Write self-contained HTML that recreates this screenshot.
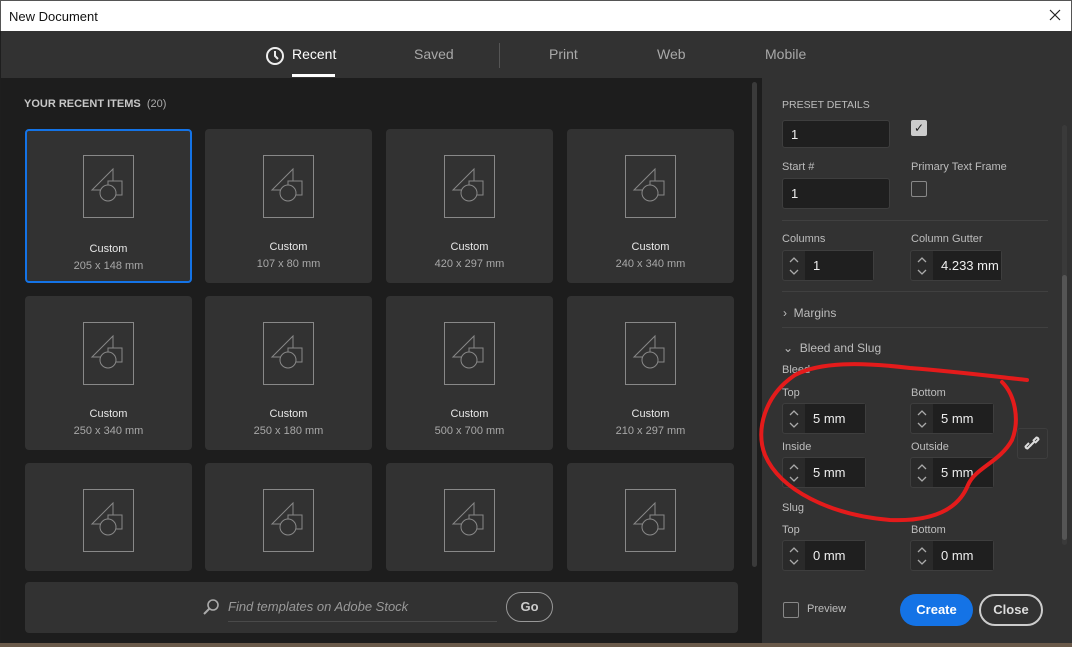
<!DOCTYPE html>
<html><head><meta charset="utf-8"><style>
*{box-sizing:border-box;margin:0;padding:0}
body{width:1072px;height:647px;overflow:hidden;background:#1e1e1e;font-family:"Liberation Sans",sans-serif;position:relative}
.abs{position:absolute}
.title{left:0;top:0;width:1072px;height:31px;background:#fff;border:1px solid #555;border-bottom:none;font-size:13px;color:#111;padding:8px 0 0 8px}
.tabs{left:1px;top:31px;width:1071px;height:47px;background:#323232}
.tab{top:46px;font-size:14px;color:#a8a8a8}
.left{left:1px;top:78px;width:761px;height:565px;background:#1d1d1d}
.card{position:absolute;width:167px;height:154px;background:#323232;border-radius:4px}
.card svg{position:absolute;left:57px;top:25px}
.card .n{position:absolute;top:112px;width:100%;text-align:center;font-size:11px;color:#e8e8e8}
.card .s{position:absolute;top:129px;width:100%;text-align:center;font-size:11px;color:#a8a8a8}
.right{left:762px;top:78px;width:310px;height:565px;background:#323232}
.lbl{position:absolute;font-size:11px;color:#bdbdbd}
.inp{position:absolute;background:#1f1f1f;border:1px solid #3e3e3e;border-radius:3px;color:#eee;font-size:13px;padding-left:8px;display:flex;align-items:center}
.spin{position:absolute;height:31px;border:1px solid #3e3e3e;border-radius:3px;background:#2a2a2a}
.spin svg{position:absolute;left:5px;top:5px}
.spin .v{position:absolute;left:22px;top:0;right:0;height:29px;background:#1f1f1f;color:#eee;font-size:13px;padding-left:8px;line-height:29px}
.hr{position:absolute;left:782px;width:266px;height:1px;background:#404040}
</style></head><body>
<div class="abs title">New Document</div>
<svg class="abs" style="left:1049px;top:9px" width="12" height="12"><path d="M1 1L11 11M11 1L1 11" stroke="#222" stroke-width="1.2"/></svg>
<div class="abs tabs"></div>
<svg class="abs" style="left:265px;top:46px" width="20" height="20"><circle cx="10" cy="10" r="8" fill="none" stroke="#eee" stroke-width="2"/><path d="M10 5v5l3 3" fill="none" stroke="#eee" stroke-width="2"/></svg>
<div class="abs tab" style="left:292px;color:#fff">Recent</div>
<div class="abs" style="left:292px;top:74px;width:43px;height:3px;background:#fff"></div>
<div class="abs tab" style="left:414px">Saved</div>
<div class="abs" style="left:499px;top:43px;width:1px;height:25px;background:#555"></div>
<div class="abs tab" style="left:549px">Print</div>
<div class="abs tab" style="left:657px">Web</div>
<div class="abs tab" style="left:765px">Mobile</div>
<div class="abs left"></div>
<div class="abs" style="left:24px;top:98px;font-size:11px;color:#c8c8c8;font-weight:bold">YOUR RECENT ITEMS <span style="font-weight:normal;color:#aaa">&nbsp;(20)</span></div>
<div class="abs" style="left:752px;top:82px;width:5px;height:485px;background:#3a3a3a;border-radius:3px"></div>
<div id="grid"></div>
<div class="abs" style="left:25px;top:582px;width:713px;height:51px;background:#323232;border-radius:4px"></div>
<svg class="abs" style="left:202px;top:598px" width="18" height="18"><circle cx="11" cy="7" r="5" fill="none" stroke="#aaa" stroke-width="1.6"/><path d="M7.5 10.5L2 16" stroke="#aaa" stroke-width="2"/></svg>
<div class="abs" style="left:228px;top:599px;font-size:13px;color:#999;font-style:italic">Find templates on Adobe Stock</div>
<div class="abs" style="left:228px;top:621px;width:269px;height:1px;background:#4a4a4a"></div>
<div class="abs" style="left:506px;top:592px;width:47px;height:30px;border:1.5px solid #999;border-radius:15px;color:#ccc;font-size:13px;font-weight:bold;text-align:center;line-height:27px">Go</div>
<div class="abs right"></div>
<div class="abs" style="left:1062px;top:125px;width:5px;height:420px;background:#3a3a3a;border-radius:3px"></div>
<div class="abs" style="left:1062px;top:275px;width:5px;height:265px;background:#555;border-radius:3px"></div>
<div class="lbl" style="left:782px;top:99px;font-size:10.5px">PRESET DETAILS</div>
<div class="inp" style="left:782px;top:120px;width:108px;height:28px">1</div>
<div class="abs" style="left:911px;top:120px;width:16px;height:16px;background:#ccc;border-radius:2px;color:#222;font-size:12px;text-align:center;line-height:16px">✓</div>
<div class="lbl" style="left:782px;top:161px">Start #</div>
<div class="lbl" style="left:911px;top:161px">Primary Text Frame</div>
<div class="inp" style="left:782px;top:178px;width:108px;height:31px">1</div>
<div class="abs" style="left:911px;top:181px;width:16px;height:16px;border:1px solid #888;border-radius:2px"></div>
<div class="hr" style="top:220px"></div>
<div class="lbl" style="left:782px;top:233px">Columns</div>
<div class="lbl" style="left:911px;top:233px">Column Gutter</div>
<div id="spins"></div>
<div class="hr" style="top:291px"></div>
<div class="lbl" style="left:783px;top:306px;font-size:12px">›&nbsp; Margins</div>
<div class="hr" style="top:327px"></div>
<div class="lbl" style="left:783px;top:341px;font-size:12px">⌄&nbsp; Bleed and Slug</div>
<div class="lbl" style="left:782px;top:364px">Bleed</div>
<div class="lbl" style="left:782px;top:387px">Top</div>
<div class="lbl" style="left:911px;top:387px">Bottom</div>
<div class="lbl" style="left:782px;top:441px">Inside</div>
<div class="lbl" style="left:911px;top:441px">Outside</div>
<div class="abs" style="left:1017px;top:428px;width:31px;height:31px;border:1px solid #3e3e3e;border-radius:3px"></div>
<svg class="abs" style="left:1024px;top:435px" width="17" height="17"><g fill="none" stroke="#ddd" stroke-width="2"><path d="M7 10 L3.5 13.5 A2 2 0 0 1 1.5 11.5 L5 8"/><path d="M10 7 L13.5 3.5 A2 2 0 0 0 11.5 1.5 L8 5" transform="translate(1 1)"/><path d="M6 11L11 6"/></g></svg>
<div class="lbl" style="left:782px;top:502px">Slug</div>
<div class="lbl" style="left:782px;top:524px">Top</div>
<div class="lbl" style="left:911px;top:524px">Bottom</div>
<div class="abs" style="left:783px;top:602px;width:16px;height:16px;border:1px solid #888;border-radius:2px"></div>
<div class="lbl" style="left:807px;top:603px">Preview</div>
<div class="abs" style="left:900px;top:594px;width:73px;height:32px;background:#1473e6;border-radius:16px;color:#fff;font-size:13px;font-weight:bold;text-align:center;line-height:32px">Create</div>
<div class="abs" style="left:979px;top:594px;width:64px;height:32px;border:2px solid #ccc;border-radius:16px;color:#ddd;font-size:13px;font-weight:bold;text-align:center;line-height:28px">Close</div>
<svg class="abs" style="left:0;top:0" width="1072" height="647"><path d="M1027 380 C990 376 960 372 910 368 C860 362 820 362 795 375 C765 395 755 430 765 455 C780 490 830 515 890 520 C940 522 960 505 968 485 C975 468 1000 462 1012 440 C1020 420 1015 395 1002 382" fill="none" stroke="#e41b1b" stroke-width="4" stroke-linecap="round"/></svg>
<div class="abs" style="left:0;top:643px;width:1072px;height:4px;background:#6a5a4a"></div>
<script>
var xs=[25,205,386,567],ys=[129,296,463],
d=[["205 x 148 mm","107 x 80 mm","420 x 297 mm","240 x 340 mm"],["250 x 340 mm","250 x 180 mm","500 x 700 mm","210 x 297 mm"],["","","",""]],h='';
for(var r=0;r<3;r++)for(var c=0;c<4;c++){var ht=r==2?108:154;
h+='<div class="card" style="left:'+xs[c]+'px;top:'+ys[r]+'px;height:'+ht+'px;'+(r==0&&c==0?'border:2px solid #1473e6;':'')+'"><svg width="54" height="66" style="'+(r==0&&c==0?'left:55px;top:23px':'')+'"><rect x="1.5" y="1.5" width="50" height="62" fill="none" stroke="#888" stroke-width="1"/><path d="M31 15 L31 36 L10 36 Z" fill="none" stroke="#888"/><rect x="26" y="27" width="14" height="14" fill="#323232" stroke="#888"/><circle cx="26" cy="39" r="8" fill="#323232" stroke="#888"/></svg>'+(r<2?'<div class="n">Custom</div><div class="s">'+d[r][c]+'</div>':'')+'</div>';}
document.getElementById('grid').innerHTML=h;
var sp=[[782,250,92,"1"],[910,250,92,"4.233 mm"],[782,403,84,"5 mm"],[910,403,84,"5 mm"],[782,457,84,"5 mm"],[910,457,84,"5 mm"],[782,540,84,"0 mm"],[910,540,84,"0 mm"]],s='';
sp.forEach(function(p){s+='<div class="spin" style="left:'+p[0]+'px;top:'+p[1]+'px;width:'+p[2]+'px"><svg width="12" height="20"><path d="M2 6L6 2L10 6M2 14L6 18L10 14" fill="none" stroke="#aaa" stroke-width="1.3"/></svg><div class="v">'+p[3]+'</div></div>';});
document.getElementById('spins').innerHTML=s;
</script>
</body></html>
